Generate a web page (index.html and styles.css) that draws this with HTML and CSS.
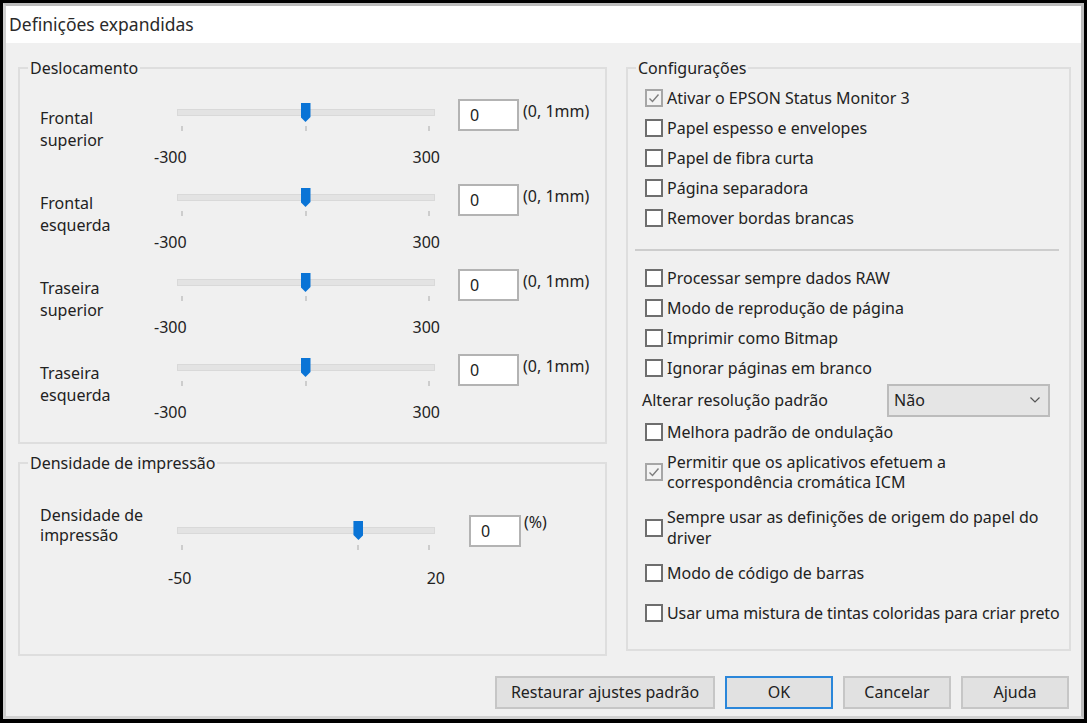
FILE: index.html
```html
<!DOCTYPE html>
<html lang="pt">
<head>
<meta charset="utf-8">
<title>Definições expandidas</title>
<link rel="stylesheet" href="styles.css">
</head>
<body>
<div class="window">
  <div class="titlebar">Definições expandidas</div>
  <div class="client">
    <div class="panels">
      <div class="col-left">
        <fieldset class="group group-offset">
          <legend>Deslocamento</legend>
          <div class="offset-rows">
            <div class="slider-row">
              <div class="row-label">Frontal<br>superior</div>
              <div class="slider">
                <div class="track"><div class="rail"><span class="thumb" style="left:50%"></span></div></div>
                <div class="ticks"><i style="left:0%"></i><i style="left:50%"></i><i style="left:100%"></i></div>
                <div class="scale"><span>-300</span><span>300</span></div>
              </div>
              <div class="field">0</div>
              <div class="unit">(0, 1mm)</div>
            </div>
            <div class="slider-row">
              <div class="row-label">Frontal<br>esquerda</div>
              <div class="slider">
                <div class="track"><div class="rail"><span class="thumb" style="left:50%"></span></div></div>
                <div class="ticks"><i style="left:0%"></i><i style="left:50%"></i><i style="left:100%"></i></div>
                <div class="scale"><span>-300</span><span>300</span></div>
              </div>
              <div class="field">0</div>
              <div class="unit">(0, 1mm)</div>
            </div>
            <div class="slider-row">
              <div class="row-label">Traseira<br>superior</div>
              <div class="slider">
                <div class="track"><div class="rail"><span class="thumb" style="left:50%"></span></div></div>
                <div class="ticks"><i style="left:0%"></i><i style="left:50%"></i><i style="left:100%"></i></div>
                <div class="scale"><span>-300</span><span>300</span></div>
              </div>
              <div class="field">0</div>
              <div class="unit">(0, 1mm)</div>
            </div>
            <div class="slider-row">
              <div class="row-label">Traseira<br>esquerda</div>
              <div class="slider">
                <div class="track"><div class="rail"><span class="thumb" style="left:50%"></span></div></div>
                <div class="ticks"><i style="left:0%"></i><i style="left:50%"></i><i style="left:100%"></i></div>
                <div class="scale"><span>-300</span><span>300</span></div>
              </div>
              <div class="field">0</div>
              <div class="unit">(0, 1mm)</div>
            </div>
          </div>
        </fieldset>

        <fieldset class="group group-density">
          <legend>Densidade de impressão</legend>
          <div class="density-rows">
            <div class="slider-row density">
              <div class="row-label">Densidade de<br>impressão</div>
              <div class="slider">
                <div class="track"><div class="rail"><span class="thumb" style="left:71.43%"></span></div></div>
                <div class="ticks"><i style="left:0%"></i><i style="left:71.43%"></i><i style="left:100%"></i></div>
                <div class="scale"><span>-50</span><span>20</span></div>
              </div>
              <div class="field">0</div>
              <div class="unit">(%)</div>
            </div>
          </div>
        </fieldset>
      </div>

      <fieldset class="group group-config">
        <legend>Configurações</legend>
        <div class="config">
          <div class="check"><span class="box checked"><svg viewBox="0 0 14 14" width="14" height="14"><path d="M2.5 7.5 L5.5 10.5 L11.5 3.5" fill="none" stroke="#7e7e7e" stroke-width="1.4"/></svg></span><span>Ativar o EPSON Status Monitor 3</span></div>
          <div class="check"><span class="box"></span><span>Papel espesso e envelopes</span></div>
          <div class="check"><span class="box"></span><span>Papel de fibra curta</span></div>
          <div class="check"><span class="box"></span><span>Página separadora</span></div>
          <div class="check"><span class="box"></span><span>Remover bordas brancas</span></div>

          <div class="sep"></div>

          <div class="check"><span class="box"></span><span>Processar sempre dados RAW</span></div>
          <div class="check"><span class="box"></span><span>Modo de reprodução de página</span></div>
          <div class="check"><span class="box"></span><span>Imprimir como Bitmap</span></div>
          <div class="check"><span class="box"></span><span>Ignorar páginas em branco</span></div>
          <div class="select-row">
            <span class="select-label">Alterar resolução padrão</span>
            <div class="select"><span>Não</span><svg viewBox="0 0 10 6" width="10" height="6"><path d="M0.5 0.5 L5 5 L9.5 0.5" fill="none" stroke="#555" stroke-width="1.2"/></svg></div>
          </div>
          <div class="check"><span class="box"></span><span>Melhora padrão de ondulação</span></div>
          <div class="check two"><span class="box checked"><svg viewBox="0 0 14 14" width="14" height="14"><path d="M2.5 7.5 L5.5 10.5 L11.5 3.5" fill="none" stroke="#7e7e7e" stroke-width="1.4"/></svg></span><span class="text">Permitir que os aplicativos efetuem a<br>correspondência cromática ICM</span></div>
          <div class="check two-wide"><span class="box"></span><span class="text">Sempre usar as definições de origem do papel do<br>driver</span></div>
          <div class="check short"><span class="box"></span><span>Modo de código de barras</span></div>
          <div class="check last"><span class="box"></span><span>Usar uma mistura de tintas coloridas para criar preto</span></div>
        </div>
      </fieldset>
    </div>

    <div class="buttons">
      <div class="btn btn-wide">Restaurar ajustes padrão</div>
      <div class="btn btn-default">OK</div>
      <div class="btn">Cancelar</div>
      <div class="btn">Ajuda</div>
    </div>
  </div>
</div>
</body>
</html>
```

FILE: styles.css
```css
* { box-sizing: border-box; }

html, body { margin: 0; padding: 0; }

body {
  width: 1087px;
  height: 723px;
  overflow: hidden;
  background: #000;
  font-family: "Noto Sans", "Open Sans", sans-serif;
  font-size: 16px;
  color: #222;
}

/* dialog frame */
.window {
  margin: 3px 3px 4px 3px;
  height: 716px;
  border: 3px solid #bcbcbc;
  border-left-color: #cfcfcf;
  border-bottom-color: #d2d2d2;
  background: #f0f0f0;
  display: flex;
  flex-direction: column;
}

.titlebar {
  flex: none;
  height: 37px;
  background: #fff;
  padding-left: 3px;
  font-size: 17.5px;
  line-height: 37px;
  color: #2a2a2a;
}

.client {
  flex: 1;
  padding: 14px 10px 0 12px;
  display: flex;
  flex-direction: column;
}

.panels {
  display: grid;
  grid-template-columns: 589px 445px;
  column-gap: 19px;
  align-items: start;
}

/* group boxes */
.group {
  margin: 0;
  padding: 0;
  min-width: 0;
  border: 2px solid #dedede;
}

.group legend {
  margin-left: 8px;
  padding: 0 2px;
  line-height: 22px;
}

.group-offset { height: 387px; }
.group-density { height: 204px; margin-top: 8px; }
.group-config { height: 594px; }

/* slider rows */
.offset-rows { padding: 18px 0 0 20px; }
.density-rows { padding: 31px 0 0 20px; }

.slider-row {
  display: flex;
  align-items: flex-start;
  height: 85px;
}

.row-label {
  flex: none;
  width: 125px;
  padding-top: 10px;
  line-height: 22px;
}

.slider { flex: none; width: 280px; }

.track {
  position: relative;
  margin: 12px 0 0 12px;
  width: 258px;
  height: 7px;
  background: #e3e3e3;
  border: 1px solid #d9d9d9;
}

.rail {
  position: absolute;
  left: 4px;
  right: 5px;
  top: 0;
  bottom: 0;
}

.thumb {
  position: absolute;
  top: -7px;
  width: 10px;
  height: 19px;
  margin-left: -5px;
  background: #0a74d6;
  clip-path: polygon(0 0, 100% 0, 100% 74%, 50% 100%, 0 74%);
}

.ticks {
  position: relative;
  height: 5px;
  width: 247px;
  margin: 10px 0 0 17px;
}

.ticks i {
  position: absolute;
  top: 0;
  width: 2px;
  height: 5px;
  margin-left: -1px;
  background: #cdcdcd;
}

.scale {
  display: flex;
  justify-content: space-between;
  width: 286px;
  margin: 15px 0 0 -11px;
  line-height: 22px;
}

.field {
  flex: none;
  margin: 2px 0 0 13px;
  width: 61px;
  height: 32px;
  background: #fff;
  border: 2px solid #b3b3b3;
  padding-left: 10px;
  line-height: 28px;
}

.unit {
  margin: 4px 0 0 4px;
  line-height: 21px;
}

/* density variant */
.density .row-label { padding-top: 0; line-height: 20px; }
.density .track { margin-top: 22px; }
.density .ticks { margin-top: 11px; }
.density .scale { width: 280px; padding-left: 3px; margin: 17px 0 0 0; }
.density .field { margin: 10px 0 0 24px; width: 52px; }
.density .unit { margin: 7px 0 0 3px; }

/* settings list */
.config { padding: 4px 0 0 17px; }

.check {
  display: flex;
  align-items: center;
  height: 30px;
  white-space: nowrap;
}

.box {
  flex: none;
  width: 18px;
  height: 18px;
  margin-right: 4px;
  background: #fff;
  border: 2px solid #6e6e6e;
  display: flex;
  align-items: center;
  justify-content: center;
}

.box.checked {
  background: #f3f3f3;
  border-color: #a6a6a6;
}

.check.two { height: 50px; }
.check.two .text { line-height: 20px; }
.check.two-wide { height: 62px; }
.check.two-wide .text { line-height: 21px; }
.check.short { height: 28px; }
.check.last { margin-top: 11px; letter-spacing: -0.1px; }

.sep {
  height: 2px;
  margin: 16px 10px 12px -10px;
  background: #cdcdcd;
}

.select-row {
  display: flex;
  align-items: center;
  height: 34px;
}

.select-label {
  flex: none;
  width: 245px;
  margin-left: -3px;
}

.select {
  width: 163px;
  height: 33px;
  background: #e5e5e5;
  border: 2px solid #bcbcbc;
  display: flex;
  align-items: center;
  justify-content: space-between;
  padding: 0 8px 0 5px;
}

/* dialog buttons */
.buttons {
  display: flex;
  justify-content: flex-end;
  gap: 10px;
  margin-top: 20px;
  padding-right: 2px;
}

.btn {
  width: 108px;
  height: 33px;
  background: #e1e1e1;
  border: 2px solid #c6c6c6;
  text-align: center;
  line-height: 29px;
}

.btn-wide { width: 220px; }
.btn-default { border-color: #2b87da; }
```
